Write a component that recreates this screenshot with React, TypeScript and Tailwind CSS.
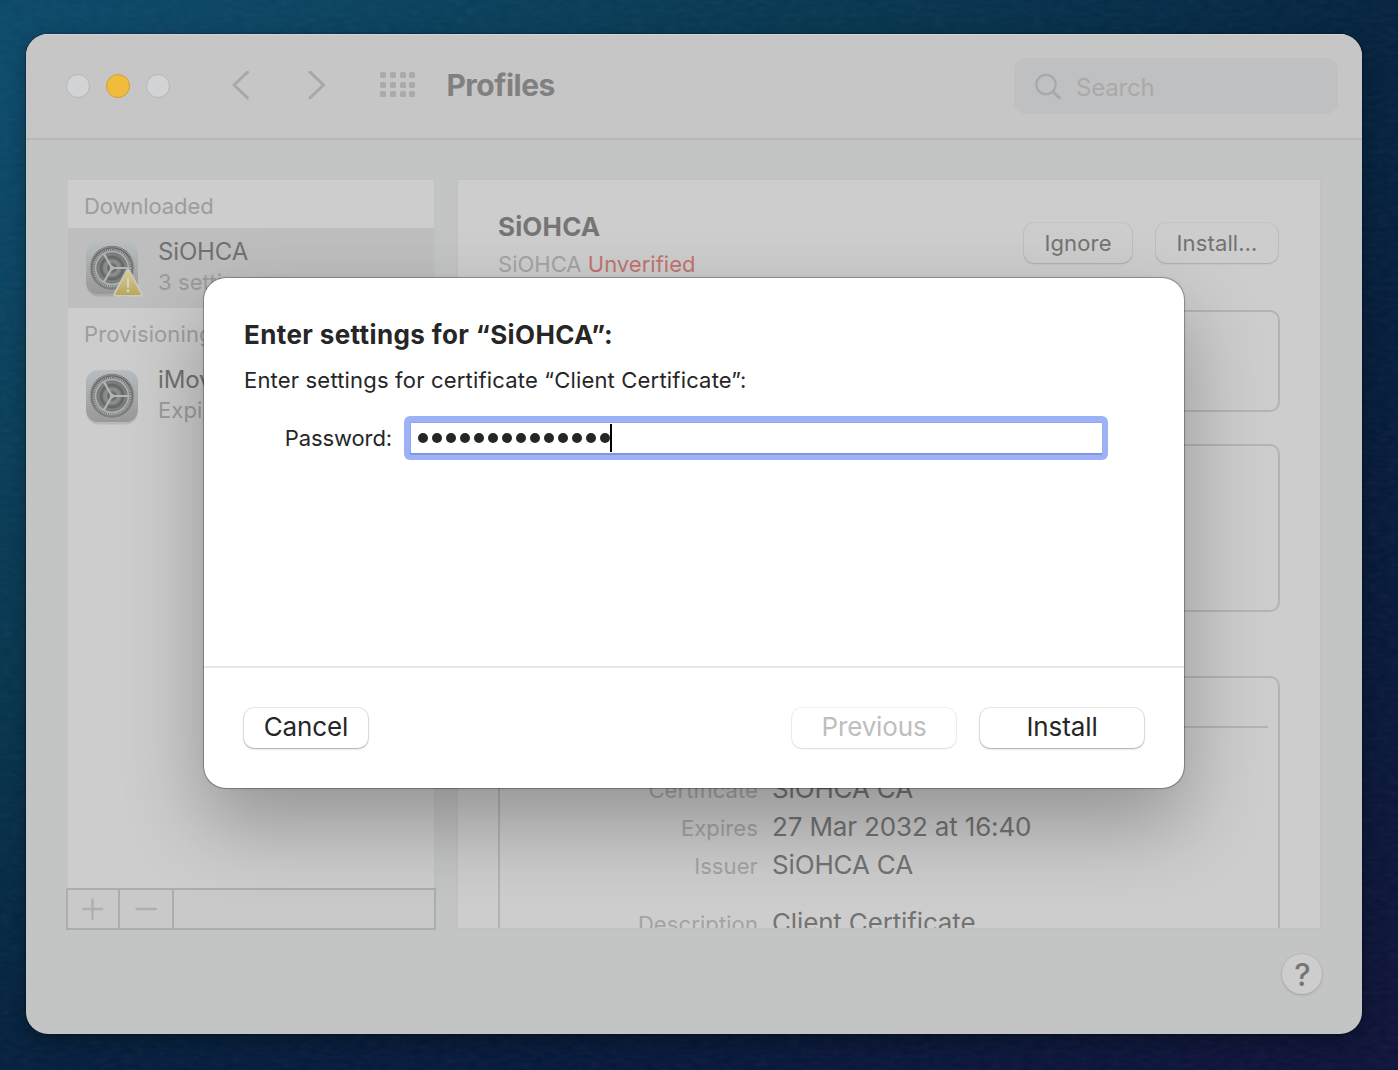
import React from "react";

function GearIcon({ warning = false }: { warning?: boolean }) {
  const id = warning ? "gw" : "gp";
  return (
    <svg width="62" height="62" viewBox="0 0 62 62" className="block shrink-0">
      <defs>
        <linearGradient id={id + "a"} x1="0" y1="0" x2="0" y2="1">
          <stop offset="0" stopColor="#b8bdc1" />
          <stop offset="1" stopColor="#989997" />
        </linearGradient>
        <linearGradient id={id + "b"} x1="0" y1="0" x2="0" y2="1">
          <stop offset="0" stopColor="#666869" />
          <stop offset="1" stopColor="#808181" />
        </linearGradient>
        <linearGradient id={id + "c"} x1="0" y1="0" x2="0" y2="1">
          <stop offset="0" stopColor="#d6cb8b" />
          <stop offset="1" stopColor="#bba85f" />
        </linearGradient>
      </defs>
      <rect x="4.5" y="6" width="51" height="52.5" rx="12" fill="#000" opacity=".1" />
      <rect x="4" y="4" width="52" height="52" rx="12" fill={`url(#${id}a)`} />
      <circle cx="30" cy="30" r="22.2" fill={`url(#${id}b)`} />
      <circle cx="30" cy="30.6" r="21.8" fill="none" stroke="#a6a8a8" strokeWidth=".7" />
      <circle cx="30" cy="30" r="18.3" fill="none" stroke="#b0b1b1" strokeWidth="2.2" strokeDasharray="1 .92" />
      <circle cx="30" cy="30" r="16.4" fill="#7b7d7e" stroke="#b0b1b1" strokeWidth="1.5" />
      <circle cx="30" cy="30" r="11" fill="none" stroke="#656768" strokeWidth="2.4" />
      <circle cx="30" cy="30" r="8.6" fill="#8a8c8c" />
      <circle cx="30" cy="30" r="5" fill="#6e7070" />
      <path d="M30 30H46.5M30 30L21.8 15.8M30 30L21.8 44.2" stroke="#b4b5b5" strokeWidth="2.2" fill="none" />
      <circle cx="30" cy="30" r="2.2" fill="#b4b5b5" />
      {warning && (
        <g>
          <path d="M46 33.3L58.3 56.3H33.7Z" fill="#cbcbc6" stroke="#cbcbc6" strokeWidth="4.6" strokeLinejoin="round" />
          <path d="M46 33.8L57.6 55.9H34.4Z" fill={`url(#${id}c)`} stroke={`url(#${id}c)`} strokeWidth="2" strokeLinejoin="round" />
          <path d="M46 40.5V49" stroke="#d4d2c6" strokeWidth="2.2" strokeLinecap="round" />
          <circle cx="46" cy="52.8" r="1.5" fill="#d4d2c6" />
        </g>
      )}
    </svg>
  );
}

function ListRow({ title, sub, selected, warning }: { title: string; sub: string; selected?: boolean; warning?: boolean }) {
  return (
    <div className={"flex h-20 items-start pl-[14px] pt-[10px] " + (selected ? "bg-[#bebebe]" : "")}>
      <GearIcon warning={warning} />
      <div className="ml-[14px] whitespace-nowrap">
        <div className="h-7 text-[24px] leading-7 tracking-[-0.15px] text-[#717171]">{title}</div>
        <div className="mt-[2px] h-7 text-[22px] leading-7 tracking-[0.1px] text-[#9b9b9b]">{sub}</div>
      </div>
    </div>
  );
}

function Detail({ label, value }: { label: string; value: string }) {
  return (
    <div className="flex h-[38px] items-center whitespace-nowrap">
      <div className="w-[258px] pt-[1px] text-right text-[22px] leading-8 tracking-[0.1px] text-[#a3a3a3]">{label}</div>
      <div className="ml-[14px] text-[26px] leading-8 tracking-[-0.15px] text-[#737373]">{value}</div>
    </div>
  );
}

function Toolbar() {
  return (
    <header className="flex h-[106px] shrink-0 items-center border-b-2 border-[#b6b7b7] bg-[#c6c6c6] shadow-[inset_0_1px_0_#d4d4d4]">
      <div className="ml-10 flex gap-4">
        <span className="size-6 rounded-full border border-[#b4b6b8] bg-[#d1d3d5]" />
        <span className="size-6 rounded-full border border-[#d49f2c] bg-[#f0bc3e]" />
        <span className="size-6 rounded-full border border-[#b4b6b8] bg-[#d1d3d5]" />
      </div>
      <svg width="20" height="30" viewBox="0 0 20 30" className="ml-[61px]" fill="none" stroke="#a7a8a9" strokeWidth="3" strokeLinecap="round" strokeLinejoin="round">
        <path d="M16.5 1.2L3 14L16.5 26.8" />
      </svg>
      <svg width="20" height="30" viewBox="0 0 20 30" className="ml-[56px]" fill="none" stroke="#a7a8a9" strokeWidth="3" strokeLinecap="round" strokeLinejoin="round">
        <path d="M3 1.2L16.5 14L3 26.8" />
      </svg>
      <div className="-mt-[3px] ml-[53px] grid grid-cols-4 gap-x-[3.8px] gap-y-[3.8px]">
        {Array.from({ length: 12 }, (_, i) => (
          <span key={i} className="size-[6px] rounded-[1.5px] bg-[#a9aaab]" />
        ))}
      </div>
      <h1 className="-mt-[3px] ml-[31px] text-[30px] font-bold leading-9 tracking-[-0.5px] text-[#808080]">Profiles</h1>
      <div className="ml-auto mr-6 flex h-14 w-[324px] items-center rounded-xl bg-[#bfc0c1]">
        <svg width="28" height="28" viewBox="0 0 28 28" className="ml-5 mt-[1px]" fill="none" stroke="#a9a9a9" strokeLinecap="round">
          <circle cx="12" cy="11.5" r="9.7" strokeWidth="2.2" />
          <path d="M19 18.7L25.5 25" strokeWidth="3" />
        </svg>
        <span className="ml-[14px] mt-[3px] text-[24px] leading-8 tracking-[-0.2px] text-[#a9a9a9]">Search</span>
      </div>
    </header>
  );
}

const smallButton =
  "flex h-10 items-center justify-center rounded-[10px] bg-[#cdcdcd] text-[22px] tracking-[0.15px] text-[#737373] shadow-[0_0_0_1px_rgba(0,0,0,0.04),0_1px_2px_rgba(0,0,0,0.14)]";

function Sidebar() {
  return (
    <aside className="flex h-[752px] w-[370px] flex-col">
      <div className="flex-1 border-x-2 border-t-2 border-[#c3c3c3] bg-[#cdcdcd]">
        <div className="flex h-12 items-center pl-4 pt-[5px] text-[22px] tracking-[-0.1px] text-[#9d9d9d]">Downloaded</div>
        <ListRow title="SiOHCA" sub="3 settings" selected warning />
        <div className="flex h-12 items-center pl-4 pt-[5px] text-[22px] tracking-[0.1px] text-[#9d9d9d]">Provisioning</div>
        <ListRow title="iMovie" sub="Expired" />
      </div>
      <div className="flex h-[42px] border-2 border-[#adadad] bg-[#c9c9c9] text-[#afafaf]">
        <div className="flex w-[52px] items-center justify-center border-r-2 border-[#adadad] pb-[1px]">
          <svg width="22" height="22" viewBox="0 0 22 22" stroke="currentColor" strokeWidth="2.4" strokeLinecap="round">
            <path d="M10.5 1.2V20.8M1 11H20.2" />
          </svg>
        </div>
        <div className="flex w-[54px] items-center justify-center border-r-2 border-[#adadad]">
          <svg width="22" height="22" viewBox="0 0 22 22" stroke="currentColor" strokeWidth="2.4" strokeLinecap="round">
            <path d="M1.5 11H20.8" />
          </svg>
        </div>
      </div>
    </aside>
  );
}

function ProfilePane() {
  return (
    <section className="h-[752px] w-[866px] overflow-hidden border-2 border-[#c1c2c2] bg-[#cdcdcd]">
      <div className="flex h-[130px] justify-between pl-10 pr-[42px]">
        <div className="pt-8">
          <h2 className="text-[26px] font-bold leading-[30px] tracking-[0.15px] text-[#757575]">SiOHCA</h2>
          <p className="mt-[7px] whitespace-nowrap text-[22px] leading-[30px] tracking-[0.02px] text-[#a3a3a3]">
            SiOHCA <span className="text-[#c07470]">Unverified</span>
          </p>
        </div>
        <div className="flex gap-6 pt-[43px]">
          <button className={smallButton + " w-[108px]"}>Ignore</button>
          <button className={smallButton + " w-[122px]"}>Install…</button>
        </div>
      </div>
      <div className="mx-10 h-[102px] rounded-[10px] border-2 border-[#b3b3b3]" />
      <div className="mx-10 mt-8 h-[168px] rounded-[10px] border-2 border-[#b3b3b3]" />
      <div className="mx-10 mt-16 h-[400px] rounded-[10px] border-2 border-[#b3b3b3]">
        <div className="mx-[10px] h-[50px] border-b-2 border-[#b3b3b3]" />
        <div className="pt-[42px]">
          <Detail label="Certificate" value="SiOHCA CA" />
          <Detail label="Expires" value="27 Mar 2032 at 16:40" />
          <Detail label="Issuer" value="SiOHCA CA" />
          <div className="h-5" />
          <Detail label="Description" value="Client Certificate" />
        </div>
      </div>
    </section>
  );
}

const dialogButton =
  "flex h-10 items-center justify-center rounded-[10px] bg-white pb-[3px] text-[26px] tracking-[-0.1px] text-[#262626]";
const raised = " shadow-[0_0_0_1px_rgba(0,0,0,0.08),0_1px_2px_rgba(0,0,0,0.28)]";

function SettingsDialog() {
  return (
    <div
      role="dialog"
      className="absolute left-[178px] top-[244px] flex h-[510px] w-[980px] flex-col rounded-[22px] bg-white text-[#262626] shadow-[0_0_0_1px_rgba(0,0,0,0.22),0_0_3px_rgba(0,0,0,0.22),0_36px_80px_rgba(0,0,0,0.28)]"
    >
      <div className="h-[390px] border-b-2 border-[#e5e5e5] pl-10 pt-10">
        <h2 className="text-[26px] font-bold leading-[34px] tracking-[0.38px]">Enter settings for “SiOHCA”:</h2>
        <p className="mt-[13px] text-[22px] leading-[30px] tracking-[0.18px]">
          Enter settings for certificate “Client Certificate”:
        </p>
        <div className="mt-[21px] flex h-11 items-center">
          <label className="w-[148px] text-right text-[22px] leading-[30px] tracking-[-0.1px]">Password:</label>
          <div className="ml-3 flex h-11 w-[704px] items-center rounded-md bg-[#9db1f6] p-[6px]">
            <div className="flex h-8 w-full items-center gap-1 bg-white pl-2 shadow-[inset_0_1px_0_#92a6ec,inset_0_-1px_0_#7f93da,inset_1px_0_0_#92a6ec,0_1px_0_#8598dc]">
              {Array.from({ length: 14 }, (_, i) => (
                <span key={i} className="size-[10px] rounded-full bg-[#262626]" />
              ))}
              <span className="-ml-1 h-7 w-[2px] bg-black" />
            </div>
          </div>
        </div>
      </div>
      <div className="flex h-[120px] items-start px-10 pt-10">
        <button className={dialogButton + raised + " w-[124px]"}>Cancel</button>
        <button className="ml-auto flex h-10 w-[164px] items-center justify-center rounded-[10px] bg-white pb-[3px] text-[26px] tracking-[-0.15px] text-[#bebebe] shadow-[0_0_0_1px_rgba(0,0,0,0.05),0_1px_2px_rgba(0,0,0,0.1)]">
          Previous
        </button>
        <button className={dialogButton + raised + " ml-6 w-[164px]"}>Install</button>
      </div>
    </div>
  );
}

export default function App() {
  return (
    <main className="relative h-[1070px] w-[1398px] overflow-hidden bg-[radial-gradient(ellipse_at_0%_8%,#0b4a6c_0%,#06364f_42%,transparent_72%),linear-gradient(150deg,#05294a_0%,#031f3c_50%,#06183a_75%,#0e1238_100%)] pl-[26px] pt-[34px] font-[Inter,sans-serif]">
      <svg className="pointer-events-none absolute inset-0 size-full opacity-[0.06]">
        <filter id="weave">
          <feTurbulence type="fractalNoise" baseFrequency="0.09 0.22" numOctaves="3" seed="4" />
          <feColorMatrix type="saturate" values="0" />
        </filter>
        <rect width="100%" height="100%" filter="url(#weave)" />
      </svg>
      <div className="relative flex h-[1000px] w-[1336px] flex-col rounded-[22px] bg-[#c3c5c4] shadow-[0_0_2px_rgba(0,0,0,0.7),0_8px_24px_rgba(0,0,0,0.3)]">
        <div className="overflow-hidden rounded-t-[22px]">
          <Toolbar />
        </div>
        <div className="flex gap-5 pl-10 pt-[38px]">
          <Sidebar />
          <ProfilePane />
        </div>
        <div className="flex justify-end pr-10 pt-6">
          <button className="flex size-10 items-center justify-center rounded-full bg-[#cdcdcd] pl-[1px] text-[31px] font-medium leading-none text-[#757575] shadow-[0_0_0_1px_rgba(0,0,0,0.03),0_1px_3px_rgba(0,0,0,0.16)]">
            ?
          </button>
        </div>
        <SettingsDialog />
      </div>
    </main>
  );
}
